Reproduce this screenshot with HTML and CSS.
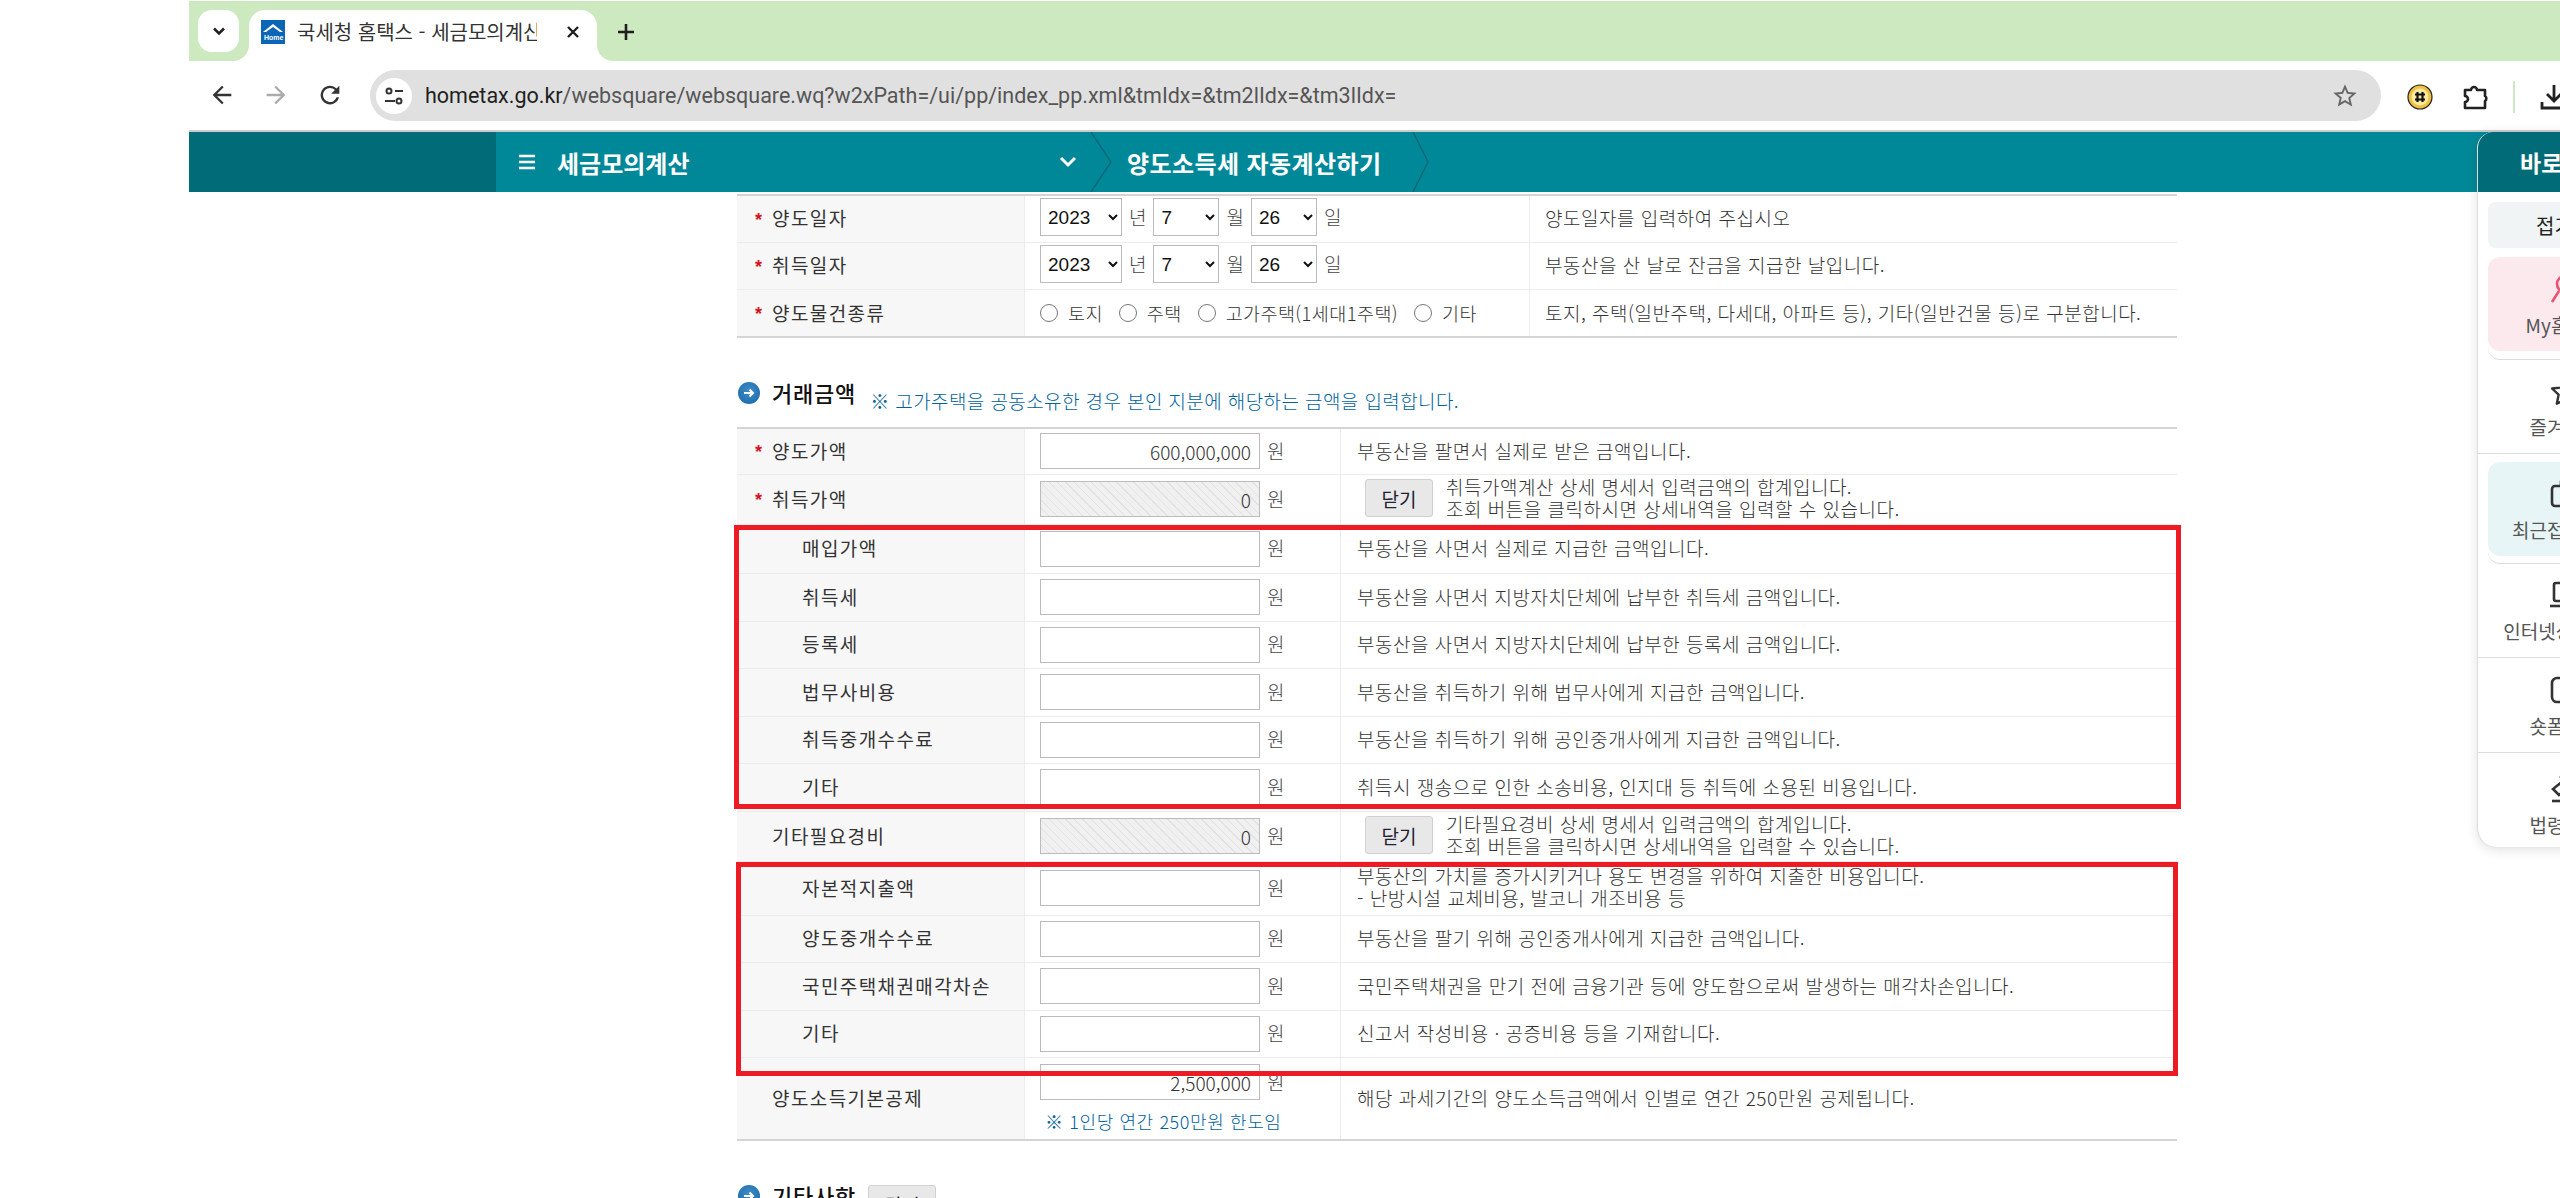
FILE: index.html
```html
<!DOCTYPE html>
<html lang="ko">
<head>
  <meta charset="utf-8">
  <meta name="viewport" content="width=device-width, initial-scale=1.0">
  <title>국세청 홈택스 - 세금모의계산</title>
  <link rel="stylesheet" href="styles.css">
</head>
<body>

  <div class="desktop-gap"></div>

  <div class="browser">

    <!-- Tab strip -->
    <div class="tabstrip">
      <button class="tab-search">
        <svg width="20" height="20" viewBox="0 0 24 24"><path d="M6 9l6 6 6-6" fill="none" stroke="#1f1f1f" stroke-width="3"/></svg>
      </button>
      <div class="tab">
        <svg class="favicon" width="24" height="24" viewBox="0 0 24 24">
          <rect width="24" height="24" fill="#0b66b5"/>
          <path d="M2 12L12 4l10 8-3 0-7-5-7 5z" fill="#fff"/>
          <text x="3" y="20" class="favicon-text">Home</text>
        </svg>
        <span class="tab-title">국세청 홈택스 - 세금모의계산</span>
        <svg class="tab-close" width="16" height="16" viewBox="0 0 16 16"><path d="M3 3l10 10M13 3L3 13" stroke="#1f1f1f" stroke-width="2.4"/></svg>
      </div>
      <svg class="tab-new" width="20" height="20" viewBox="0 0 20 20"><path d="M10 2v16M2 10h16" stroke="#1f1f1f" stroke-width="2.6"/></svg>
    </div>

    <!-- Toolbar -->
    <div class="toolbar">
      <svg class="tool" width="28" height="28" viewBox="0 0 24 24"><path d="M20 11H7.8l5.6-5.6L12 4l-8 8 8 8 1.4-1.4L7.8 13H20z" fill="#333"/></svg>
      <svg class="tool" width="28" height="28" viewBox="0 0 24 24"><path d="M4 11h12.2l-5.6-5.6L12 4l8 8-8 8-1.4-1.4 5.6-5.6H4z" fill="#aaa"/></svg>
      <svg class="tool" width="28" height="28" viewBox="0 0 24 24"><path d="M17.65 6.35A8 8 0 1 0 19.73 14h-2.08A6 6 0 1 1 12 6c1.66 0 3.14.69 4.22 1.78L13 11h7V4z" fill="#333"/></svg>
      <div class="omnibox">
        <span class="site-icon">
          <svg width="24" height="24" viewBox="0 0 24 24"><g fill="none" stroke="#333" stroke-width="2"><circle cx="7" cy="7" r="2.5"/><circle cx="17" cy="17" r="2.5"/><path d="M13 7h8M3 17h10"/></g></svg>
        </span>
        <span class="url"><b>hometax.go.kr</b>/websquare/websquare.wq?w2xPath=/ui/pp/index_pp.xml&amp;tmIdx=&amp;tm2lIdx=&amp;tm3lIdx=</span>
        <svg class="bookmark" width="28" height="28" viewBox="0 0 24 24"><path d="M22 9.24l-7.19-.62L12 2 9.19 8.63 2 9.24l5.46 4.73L5.82 21 12 17.27 18.18 21l-1.63-7.03L22 9.24zM12 15.4l-3.76 2.27 1-4.28-3.32-2.88 4.38-.38L12 6.1l1.71 4.04 4.38.38-3.32 2.88 1 4.28L12 15.4z" fill="#666"/></svg>
      </div>
      <div class="extensions">
        <svg width="26" height="26" viewBox="0 0 26 26">
          <circle cx="13" cy="13" r="12" fill="#f0c040" stroke="#222" stroke-width="1.2"/>
          <circle cx="13" cy="13" r="8.5" fill="#fbe9a0"/>
          <path d="M10.5 8v10M15.5 8v10M8 10.5h10M8 15.5h10" stroke="#111" stroke-width="2.2"/>
        </svg>
        <svg width="28" height="28" viewBox="0 0 28 28"><path d="M4 7h6a3 3 0 0 1 6 0h8v6a3 3 0 0 1 0 5v7H4v-6a3 3 0 0 0 0-6z" fill="none" stroke="#222" stroke-width="2.6" stroke-linejoin="round"/></svg>
        <span class="ext-divider"></span>
        <svg width="30" height="30" viewBox="0 0 30 30"><path d="M15 3v15M8 12l7 7 7-7M3 20v6h24v-6" fill="none" stroke="#222" stroke-width="2.8"/></svg>
      </div>
    </div>

    <!-- Site nav bar -->
    <div class="navbar">
      <div class="nav-side"></div>
      <div class="nav-menu">
        <svg class="nav-burger" width="16" height="16" viewBox="0 0 16 16"><path d="M0 2h16M0 8h16M0 14h16" stroke="#fff" stroke-width="2.4"/></svg>
        <span class="nav-title">세금모의계산</span>
        <svg class="nav-drop" width="18" height="12" viewBox="0 0 18 12"><path d="M2 2l7 7 7-7" fill="none" stroke="#fff" stroke-width="3"/></svg>
      </div>
      <svg class="nav-sep" width="22" height="60" viewBox="0 0 22 60"><path d="M1 0l20 30L1 60" fill="none" stroke="#06697a" stroke-width="1.5"/></svg>
      <span class="nav-page">양도소득세 자동계산하기</span>
      <svg class="nav-sep" width="18" height="60" viewBox="0 0 18 60"><path d="M1 0l15 30L1 60" fill="none" stroke="#06697a" stroke-width="1.5"/></svg>
    </div>

    <!-- Page content -->
    <div class="content">

      <div class="form-table date-table">
        <div class="row">
          <div class="label"><span class="req">*</span>양도일자</div>
          <div class="field">
            <select class="sel-year"><option>2023</option></select><span class="unit">년</span>
            <select class="sel-month"><option>7</option></select><span class="unit">월</span>
            <select class="sel-day"><option>26</option></select><span class="unit">일</span>
          </div>
          <div class="desc">양도일자를 입력하여 주십시오</div>
        </div>
        <div class="row">
          <div class="label"><span class="req">*</span>취득일자</div>
          <div class="field">
            <select class="sel-year"><option>2023</option></select><span class="unit">년</span>
            <select class="sel-month"><option>7</option></select><span class="unit">월</span>
            <select class="sel-day"><option>26</option></select><span class="unit">일</span>
          </div>
          <div class="desc">부동산을 산 날로 잔금을 지급한 날입니다.</div>
        </div>
        <div class="row">
          <div class="label"><span class="req">*</span>양도물건종류</div>
          <div class="field radios">
            <label><input type="radio" name="kind">토지</label>
            <label><input type="radio" name="kind">주택</label>
            <label><input type="radio" name="kind">고가주택(1세대1주택)</label>
            <label><input type="radio" name="kind">기타</label>
          </div>
          <div class="desc">토지, 주택(일반주택, 다세대, 아파트 등), 기타(일반건물 등)로 구분합니다.</div>
        </div>
      </div>

      <div class="section-head">
        <span class="bullet"><svg width="12" height="12" viewBox="0 0 12 12"><path d="M1 6h9M6.5 2.5L10 6l-3.5 3.5" fill="none" stroke="#fff" stroke-width="2"/></svg></span>
        <h3>거래금액</h3>
        <span class="section-note">※ 고가주택을 공동소유한 경우 본인 지분에 해당하는 금액을 입력합니다.</span>
      </div>

      <div class="form-table amount-table">
        <div class="row">
          <div class="label"><span class="req">*</span>양도가액</div>
          <div class="field"><input type="text" class="money" value="600,000,000"><span class="unit">원</span></div>
          <div class="desc">부동산을 팔면서 실제로 받은 금액입니다.</div>
        </div>
        <div class="row row-sum">
          <div class="label"><span class="req">*</span>취득가액</div>
          <div class="field"><input type="text" class="money hatched" value="0" disabled><span class="unit">원</span></div>
          <div class="desc desc-btn">
            <button class="close-btn">닫기</button>
            <p>취득가액계산 상세 명세서 입력금액의 합계입니다.<br>조회 버튼을 클릭하시면 상세내역을 입력할 수 있습니다.</p>
          </div>
        </div>
        <div class="row row-first">
          <div class="label sub">매입가액</div>
          <div class="field"><input type="text" class="money"><span class="unit">원</span></div>
          <div class="desc">부동산을 사면서 실제로 지급한 금액입니다.</div>
        </div>
        <div class="row">
          <div class="label sub">취득세</div>
          <div class="field"><input type="text" class="money"><span class="unit">원</span></div>
          <div class="desc">부동산을 사면서 지방자치단체에 납부한 취득세 금액입니다.</div>
        </div>
        <div class="row">
          <div class="label sub">등록세</div>
          <div class="field"><input type="text" class="money"><span class="unit">원</span></div>
          <div class="desc">부동산을 사면서 지방자치단체에 납부한 등록세 금액입니다.</div>
        </div>
        <div class="row">
          <div class="label sub">법무사비용</div>
          <div class="field"><input type="text" class="money"><span class="unit">원</span></div>
          <div class="desc">부동산을 취득하기 위해 법무사에게 지급한 금액입니다.</div>
        </div>
        <div class="row">
          <div class="label sub">취득중개수수료</div>
          <div class="field"><input type="text" class="money"><span class="unit">원</span></div>
          <div class="desc">부동산을 취득하기 위해 공인중개사에게 지급한 금액입니다.</div>
        </div>
        <div class="row">
          <div class="label sub">기타</div>
          <div class="field"><input type="text" class="money"><span class="unit">원</span></div>
          <div class="desc">취득시 쟁송으로 인한 소송비용, 인지대 등 취득에 소용된 비용입니다.</div>
        </div>
        <div class="row row-sum">
          <div class="label">기타필요경비</div>
          <div class="field"><input type="text" class="money hatched" value="0" disabled><span class="unit">원</span></div>
          <div class="desc desc-btn">
            <button class="close-btn">닫기</button>
            <p>기타필요경비 상세 명세서 입력금액의 합계입니다.<br>조회 버튼을 클릭하시면 상세내역을 입력할 수 있습니다.</p>
          </div>
        </div>
        <div class="row row-note">
          <div class="label sub">자본적지출액</div>
          <div class="field"><input type="text" class="money"><span class="unit">원</span></div>
          <div class="desc"><p>부동산의 가치를 증가시키거나 용도 변경을 위하여 지출한 비용입니다.<br>- 난방시설 교체비용, 발코니 개조비용 등</p></div>
        </div>
        <div class="row">
          <div class="label sub">양도중개수수료</div>
          <div class="field"><input type="text" class="money"><span class="unit">원</span></div>
          <div class="desc">부동산을 팔기 위해 공인중개사에게 지급한 금액입니다.</div>
        </div>
        <div class="row">
          <div class="label sub">국민주택채권매각차손</div>
          <div class="field"><input type="text" class="money"><span class="unit">원</span></div>
          <div class="desc">국민주택채권을 만기 전에 금융기관 등에 양도함으로써 발생하는 매각차손입니다.</div>
        </div>
        <div class="row">
          <div class="label sub">기타</div>
          <div class="field"><input type="text" class="money"><span class="unit">원</span></div>
          <div class="desc">신고서 작성비용 · 공증비용 등을 기재합니다.</div>
        </div>
        <div class="row row-last">
          <div class="label">양도소득기본공제</div>
          <div class="field field-stack">
            <div class="field-line"><input type="text" class="money" value="2,500,000"><span class="unit">원</span></div>
            <div class="field-note">※ 1인당 연간 250만원 한도임</div>
          </div>
          <div class="desc">해당 과세기간의 양도소득금액에서 인별로 연간 250만원 공제됩니다.</div>
        </div>
      </div>

      <div class="section-head section-etc">
        <span class="bullet"><svg width="12" height="12" viewBox="0 0 12 12"><path d="M1 6h9M6.5 2.5L10 6l-3.5 3.5" fill="none" stroke="#fff" stroke-width="2"/></svg></span>
        <h3>기타사항</h3>
        <button class="close-btn">닫기</button>
      </div>

      <!-- Red annotation boxes drawn over the table -->
      <div class="mark mark-buy"></div>
      <div class="mark mark-etc"></div>
    </div>

    <!-- Quick menu, floats over the page and runs off the window -->
    <aside class="quick">
      <div class="quick-head">바로가기</div>
      <div class="quick-fold">접기</div>
      <div class="quick-item quick-my">
        <svg width="32" height="28" viewBox="0 0 32 28"><g fill="none" stroke="#e8536f" stroke-width="2.6"><circle cx="16" cy="9" r="8"/><path d="M10 16L3 27M22 16l7 11"/></g></svg>
        <span>My홈택스</span>
      </div>
      <div class="quick-item">
        <svg width="32" height="28" viewBox="0 0 32 28"><path d="M16 2l4 8.500 9 1-6.600 6.200 1.800 9L16 22.500 7.800 26.700l1.800-9L3 11.500l9-1z" fill="none" stroke="#333" stroke-width="2.400" stroke-linejoin="round"/></svg>
        <span>즐겨찾기</span>
      </div>
      <div class="quick-item quick-recent">
        <svg width="32" height="28" viewBox="0 0 32 28"><g fill="none" stroke="#333" stroke-width="2.600"><rect x="3" y="6" width="26" height="20" rx="3"/><path d="M12 6V2h8v4M11 14h10M11 20h10"/></g></svg>
        <span>최근접속메뉴</span>
      </div>
      <div class="quick-item">
        <svg width="32" height="28" viewBox="0 0 32 28"><g fill="none" stroke="#333" stroke-width="2.600"><rect x="5" y="2" width="22" height="18" rx="2"/><path d="M1 25h30"/></g></svg>
        <span>인터넷상담예약</span>
      </div>
      <div class="quick-item">
        <svg width="32" height="28" viewBox="0 0 32 28"><g fill="none" stroke="#333" stroke-width="2.600"><rect x="3" y="2" width="26" height="24" rx="5"/><path d="M14 10l6 4-6 4z"/></g></svg>
        <span>숏폼영상</span>
      </div>
      <div class="quick-item quick-last">
        <svg width="32" height="36" viewBox="0 0 32 36"><g fill="none" stroke="#333" stroke-width="2.600"><path d="M20 2l8 8-8 8-8-8zM14 14L4 22l6 6 10-8"/><path d="M3 34h26"/></g></svg>
        <span>법령정보</span>
      </div>
    </aside>
  </div>

</body>
</html>
```

FILE: styles.css
```css
* {
  box-sizing: border-box;
  font-family: "Noto Sans CJK KR", "Noto Sans", sans-serif;
}

html, body {
  height: 1198px;
  margin: 0;
  overflow: hidden;
  background: #fff;
}

body {
  display: flex;
}

.desktop-gap {
  width: 189px;
  flex-shrink: 0;
}

.browser {
  position: relative;
  flex: 1;
  display: flex;
  flex-direction: column;
  min-width: 0;
  overflow: hidden;
}

/* Tab strip */
.tabstrip {
  height: 60px;
  flex-shrink: 0;
  margin-top: 1px;
  padding: 9px 0 0 9px;
  display: flex;
  align-items: flex-start;
  background: #cce9bf;
}

.tab-search {
  width: 41px;
  height: 42px;
  border: none;
  border-radius: 14px;
  background: #fff;
  display: flex;
  align-items: center;
  justify-content: center;
  padding: 0;
}

.tab {
  position: relative;
  width: 348px;
  height: 51px;
  margin-left: 10px;
  padding: 0 16px 8px 12px;
  display: flex;
  align-items: center;
  background: #fff;
  border-radius: 16px 16px 0 0;
}

.tab::before,
.tab::after {
  content: "";
  position: absolute;
  bottom: 0;
  width: 16px;
  height: 16px;
  background: transparent;
}

.tab::before {
  left: -16px;
  border-bottom-right-radius: 16px;
  box-shadow: 6px 6px 0 6px #fff;
}

.tab::after {
  right: -16px;
  border-bottom-left-radius: 16px;
  box-shadow: -6px 6px 0 6px #fff;
}

.favicon {
  flex-shrink: 0;
}

.favicon-text {
  font-family: "Liberation Sans", sans-serif;
  font-size: 7px;
  font-weight: 700;
  fill: #fff;
}

.tab-title {
  margin-left: 12px;
  width: 240px;
  font-size: 20px;
  color: #333;
  white-space: nowrap;
  overflow: hidden;
}

.tab-close {
  margin-left: 28px;
}

.tab-new {
  margin: 12px 0 0 19px;
}

/* Toolbar */
.toolbar {
  height: 69px;
  flex-shrink: 0;
  padding: 9px 0 0 19px;
  display: flex;
  align-items: flex-start;
  background: #fff;
  border-top-left-radius: 16px;
  position: relative;
}

.tool {
  margin: 11px 26px 0 0;
  flex-shrink: 0;
}

.omnibox {
  width: 2011px;
  height: 51px;
  padding: 0 22px 0 6px;
  display: flex;
  align-items: center;
  background: #e0e0e0;
  border-radius: 26px;
  flex-shrink: 0;
}

.site-icon {
  width: 36px;
  height: 36px;
  border-radius: 50%;
  background: #fff;
  display: flex;
  align-items: center;
  justify-content: center;
  flex-shrink: 0;
}

.url {
  margin-left: 13px;
  flex: 1;
  font-family: Roboto, sans-serif;
  font-size: 21.5px;
  color: #555;
  white-space: nowrap;
}

.url b {
  font-family: Roboto, sans-serif;
  font-weight: 400;
  color: #1f1f1f;
}

.extensions {
  margin: 11px 0 0 26px;
  display: flex;
  align-items: center;
  gap: 28px;
  flex-shrink: 0;
}

.ext-divider {
  width: 2px;
  height: 32px;
  background: #cce9bf;
  margin: 0 -4px;
}

/* Site nav bar */
.navbar {
  height: 62px;
  flex-shrink: 0;
  border-top: 2px solid #ccc;
  display: flex;
  align-items: center;
  background: #008898;
  color: #fff;
}

.nav-side {
  width: 307px;
  height: 100%;
  background: #026b78;
}

.nav-menu {
  width: 594px;
  padding: 0 13px 0 23px;
  display: flex;
  align-items: center;
}

.nav-title {
  margin-left: 22px;
  font-size: 24px;
  font-weight: 700;
}

.nav-drop {
  margin-left: auto;
}

.nav-sep {
  flex-shrink: 0;
}

.nav-page {
  margin: 0 31px 0 15px;
  font-size: 24px;
  font-weight: 700;
  letter-spacing: 0.4px;
  white-space: nowrap;
}

/* Page content */
.content {
  position: relative;
  flex: 1;
  padding: 2px 383px 0 548px;
  color: #333;
}

.form-table {
  border-top: 2px solid #d4d4d4;
  border-bottom: 2px solid #d4d4d4;
}

.row {
  height: 47.5px;
  display: flex;
  border-bottom: 1px solid #ececec;
}

.row:last-child {
  border-bottom: none;
}

.date-table .row { height: 47px; }
.date-table .row:last-child { height: 46px; }
.amount-table .row:first-child { height: 45.5px; }

.row-sum { height: 50px; }
.row-first { height: 49.5px; }
.row-note { height: 54px; }
.row-last { height: 81px; }

.label {
  width: 288px;
  flex-shrink: 0;
  padding-left: 35px;
  padding-bottom: 2px;
  position: relative;
  display: flex;
  align-items: center;
  background: #f7f7f7;
  border-right: 1px solid #ececec;
  font-size: 19px;
  letter-spacing: 1.4px;
}

.label.sub {
  padding-left: 65px;
}

.req {
  position: absolute;
  left: 18px;
  top: calc(50% - 8px);
  font-family: "Liberation Sans", sans-serif;
  font-size: 18px;
  font-weight: 700;
  line-height: 1;
  color: #d4121e;
}

.field {
  width: 316px;
  flex-shrink: 0;
  padding-left: 15px;
  display: flex;
  align-items: center;
  border-right: 1px solid #ececec;
}

.date-table .field {
  width: 505px;
}

.unit {
  margin-left: 7px;
  padding-bottom: 2px;
  font-size: 19px;
  font-weight: 300;
  color: #444;
}

select {
  height: 38px;
  padding-left: 3px;
  background: #fff;
  border: 1px solid #bbb;
  font-family: "Liberation Sans", sans-serif;
  font-size: 19px;
  color: #111;
}

.sel-year { width: 82px; }
.sel-month { width: 66px; margin-left: 7px; }
.sel-day { width: 66px; margin-left: 7px; }

.radios {
  gap: 16px;
}

.radios label {
  display: flex;
  align-items: center;
  font-size: 18.5px;
  font-weight: 300;
  letter-spacing: 0.4px;
  white-space: nowrap;
}

.radios input {
  width: 18px;
  height: 18px;
  margin: 0 10px 0 0;
}

.money {
  width: 220px;
  height: 36px;
  padding: 0 8px;
  border: 1px solid #bbb;
  background: #fff;
  text-align: right;
  font-size: 19px;
  font-weight: 300;
  color: #333;
}

.hatched {
  background: repeating-linear-gradient(45deg, #f0f0f0, #f0f0f0 5px, #e2e2e2 5px, #e2e2e2 6px);
}

.desc {
  flex: 1;
  padding-left: 16px;
  padding-bottom: 2px;
  display: flex;
  align-items: center;
  font-size: 19px;
  font-weight: 300;
  letter-spacing: 0.5px;
  color: #333;
}

.date-table .desc {
  padding-left: 15px;
}

/* the first two date rows sit a little higher */
.date-table .row:not(:last-child) .label,
.date-table .row:not(:last-child) .desc,
.date-table .row:not(:last-child) .field {
  padding-bottom: 4px;
}

.desc p {
  margin: 0;
  line-height: 22px;
}

.desc-btn {
  padding-left: 24px;
}

.close-btn {
  width: 68px;
  height: 38px;
  margin-right: 13px;
  flex-shrink: 0;
  padding: 0;
  background: #e8e8e8;
  border: 1px solid #d0d0d0;
  border-radius: 3px;
  font-size: 19px;
  color: #223;
}

.field-stack {
  flex-direction: column;
  align-items: flex-start;
  justify-content: flex-start;
  padding-top: 6px;
}

.field-line {
  display: flex;
  align-items: center;
}

.field-note {
  margin: 8px 0 0 5px;
  font-size: 18px;
  font-weight: 300;
  letter-spacing: 0.6px;
  color: #005f9e;
}

/* Section headings */
.section-head {
  height: 89px;
  padding-top: 44px;
  display: flex;
  align-items: flex-start;
}

.section-etc .close-btn {
  margin: 0 0 0 12px;
}

.bullet {
  width: 22px;
  height: 22px;
  margin-left: 1px;
  flex-shrink: 0;
  border-radius: 50%;
  background: radial-gradient(circle at 50% 40%, #3f8cc6, #1766a8);
  display: flex;
  align-items: center;
  justify-content: center;
}

.section-head h3 {
  margin: -6px 0 0 12px;
  font-size: 22px;
  font-weight: 500;
  letter-spacing: 0.8px;
  color: #111;
}

.section-note {
  margin: 5px 0 0 14px;
  font-size: 19px;
  font-weight: 300;
  letter-spacing: 0.4px;
  color: #005f9e;
}

/* Annotation boxes, placed by hand like the markup on the original capture */
.mark {
  position: absolute;
  border: 5px solid #ed1c24;
  pointer-events: none;
}

.mark-buy {
  left: 545px;
  top: 333px;
  width: 1447px;
  height: 284px;
}

.mark-etc {
  left: 547px;
  top: 670px;
  width: 1442px;
  height: 214px;
}

/* Quick menu */
.quick {
  position: absolute;
  top: 132px;
  left: 2288px;
  width: 174px;
  height: 716px;
  background: #fff;
  border-left: 1px solid #ddd;
  border-bottom: 1px solid #e8e8e8;
  border-radius: 16px 0 0 20px;
  box-shadow: 0 2px 12px rgba(0, 0, 0, 0.12);
  overflow: hidden;
}

.quick-head {
  height: 60px;
  padding-left: 42px;
  display: flex;
  align-items: center;
  background: #026b78;
  font-size: 23px;
  font-weight: 700;
  color: #fff;
  white-space: nowrap;
}

.quick-fold {
  height: 46px;
  margin: 10px 10px 0;
  padding-left: 48px;
  display: flex;
  align-items: center;
  background: #f0f4f4;
  border-radius: 8px;
  font-size: 20px;
  color: #222;
}

.quick-item {
  height: 95px;
  padding-top: 4px;
  display: flex;
  flex-direction: column;
  align-items: center;
  justify-content: center;
  gap: 8px;
  border-bottom: 1px solid #ddd;
  font-size: 19px;
  color: #555;
  white-space: nowrap;
}

.quick-my {
  height: 94px;
  margin: 9px 10px 8px;
  background: #fbe9ed;
  border: none;
  border-radius: 12px;
  box-shadow: 0 8px 0 #fff, 0 9px 0 #ddd;
}

.quick-recent {
  height: 94px;
  margin: 8px 10px 7px;
  background: #e8f5f6;
  border: none;
  border-radius: 12px;
  box-shadow: 0 7px 0 #fff, 0 8px 0 #ddd;
}

.quick-last {
  border-bottom: none;
}
```
